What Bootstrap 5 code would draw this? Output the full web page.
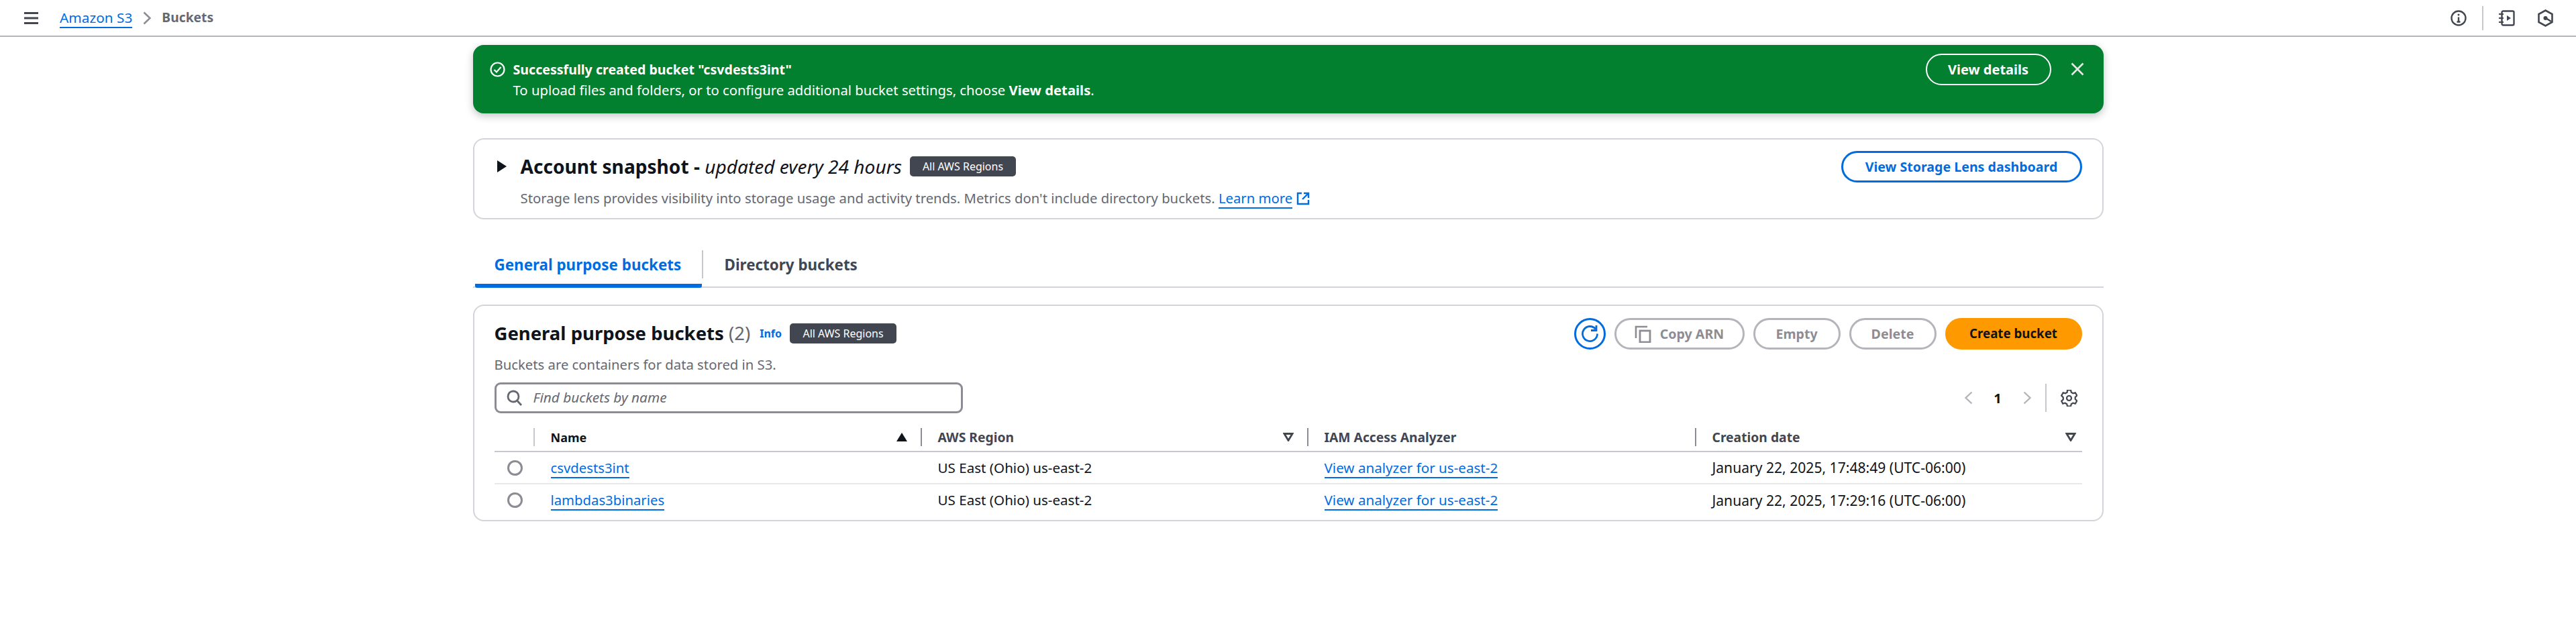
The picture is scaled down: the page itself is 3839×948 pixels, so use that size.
<!DOCTYPE html>
<html lang="en">
<head>
<meta charset="utf-8">
<title>Buckets | Amazon S3</title>
<link href="https://cdn.jsdelivr.net/npm/bootstrap@5.3.0/dist/css/bootstrap.min.css" rel="stylesheet">
<style>
:root{--ink:#0f141a;--ink2:#424650;--mut:#656871;--line:#c6c6cd;--blue:#006ce0;--off:#8c8c94;}
body{font-family:"Noto Sans","Open Sans",sans-serif;font-size:20.3px;color:var(--ink);background:#fff;min-height:948px;}
a.lk{color:var(--blue);text-decoration:none;border-bottom:2px solid var(--blue);padding-bottom:0;}
.topbar{height:55px;border-bottom:2px solid #b4b4bb;padding:0 34px 0 36px;}
.crumb-cur{color:var(--mut);font-weight:700;font-size:19.3px;}
.crumb a.lk{font-size:20.8px;line-height:28px;}
.tb-sep{width:2px;height:36px;background:#c6c6cd;margin:0 23px;}
.shell{width:2430px;margin:0 auto;padding-top:12px;}
.flash{height:102px;background:#037f30;border:0;border-radius:16px;color:#fff;padding:13px 29px 0 25px;margin:0 0 37px;box-shadow:0 4px 12px rgba(15,20,26,.25);}
.flash .ln{line-height:30px;}
.flash .ln.fw-bold{font-size:19.6px;}
.flash .txt{padding-top:9px;}
.flash svg.ok{margin:12px 12px 0 0;flex:none;}
.flash svg.xx{margin:13px 0 0 29px;}
.pill{height:47px;border-radius:24px;font-size:19.6px;font-weight:700;padding:0 30px;display:inline-flex;align-items:center;justify-content:center;border-width:2px;--bs-btn-line-height:1;}
.pill-w{width:187px;border-color:#fff;color:#fff;padding:0;font-size:20px;}
.pill-b{width:359px;border:3px solid var(--blue);color:var(--blue);padding:0;}
.pill-off,.pill-off:disabled{border:3px solid #b4b4bb;color:var(--off);padding:0;background:#fff;opacity:1;}
.pill-o{width:204px;background:#f90;border-color:#f90;color:var(--ink);padding:0;font-size:18.7px;}
.box{border:2px solid #d4d4da;border-radius:16px;background:#fff;}
.snap{height:121px;padding:17px 30px 0 34px;}
.snap h2{font-size:28.1px;font-weight:700;margin:0;line-height:46px;}
.snap h2 i{font-weight:400;}
.tagk{background:var(--ink2);color:#fff;border-radius:5px;font-size:16px;font-weight:400;height:30px;line-height:30px;padding:0;text-align:center;display:inline-block;}
.tag-a{width:158px;margin-left:12px;}
.tag-b{width:159px;margin-left:12px;}
.desc{color:var(--mut);line-height:30px;}
.snap .desc{margin:9px 0 0 35px;}
.bkt .desc{margin:8px 0 0;}
.ext{vertical-align:-3px;margin-left:6px;}
.tabsx{margin-top:44px;border-bottom:2px solid #d4d4da;height:58px;}
.tabsx .nav-link{border:0;border-radius:0;font-weight:700;font-size:22.4px;color:var(--ink2);padding:0 0 8px;height:56px;display:flex;align-items:center;margin:0;background:none;}
.tabsx .on{color:var(--blue);width:338px;border-bottom:6px solid var(--blue);border-radius:0 0 3px 3px;padding:0 0 4px 29px;margin:0 0 -2px 3px;height:58px;}
.tabsx .tb2{padding-left:32px;}
.tab-sep{width:2px;height:42px;background:#c6c6cd;margin-top:2px;}
.bkt{margin-top:25px;height:323px;padding:18px 30px 0 30px;}
.bkt h2{font-size:27.5px;font-weight:700;line-height:46px;margin:0;}
.bkt h2 span{font-weight:400;color:var(--mut);}
.info{color:var(--blue);font-size:16px;font-weight:700;text-decoration:none;margin-left:14px;}
.rf{width:47px;height:47px;border:3px solid var(--blue);border-radius:50%;background:#fff;padding:0;display:flex;align-items:center;justify-content:center;}
.srch{width:698px;height:46px;border:3px solid var(--off);border-radius:9px;padding:0 15px;}
.srch input{border:0;outline:0;font-style:italic;font-size:20.8px;padding:0;margin-left:16px;flex:1;color:var(--ink);}
.srch input::placeholder{color:var(--mut);opacity:1;}
.pg-sep{width:2px;height:42px;background:#c6c6cd;margin:0 21px 0 21px;}
.tbl{table-layout:fixed;width:2366px;margin:17px 0 0 0;--bs-table-bg:transparent;}
.tbl th,.tbl td{padding:0 0 0 26px;vertical-align:middle;box-shadow:none;}
.tbl thead th{height:40px;border-bottom:2px solid #c6c6cd;font-weight:700;font-size:19.3px;color:var(--ink2);position:relative;}
.tbl thead th.act{color:var(--ink);font-size:18px;}
.tbl thead th:not(:first-child)::before{content:"";position:absolute;left:0;top:5px;height:27px;width:2px;background:#8c8c94;}
.tbl thead th.nm::before{background:#c6c6cd;}
.tbl tbody td{height:48px;border-bottom:2px solid #e8e8ec;color:var(--ink);font-size:20.6px;}
.tbl tbody td.nmv{font-size:20.3px;}
.tbl tbody td.dt{font-size:21.1px;}
.tbl tbody tr:last-child td{border-bottom:0;}
.tbl td.rd{padding-left:19px;}
.rdo{display:block;width:23px;height:23px;border:3px solid #8c8c94;border-radius:50%;}
.sorter{position:absolute;right:20px;top:12px;line-height:0;}
.sorter.r0{right:9px;}
</style>
</head>
<body>
<header class="topbar d-flex align-items-center">
  <svg width="21" height="18" viewBox="0 0 21 18" class="me-4 flex-none" aria-hidden="true"><path d="M0 1.5h21M0 9h21M0 16.5h21" stroke="#424650" stroke-width="3"/></svg>
  <nav class="crumb d-flex align-items-center ms-2">
    <a class="lk" href="#">Amazon S3</a>
    <svg width="12" height="20" viewBox="0 0 12 20" class="mx-3" aria-hidden="true"><path d="M1.5 1.5 10.5 10l-9 8.5" fill="none" stroke="#8c8c94" stroke-width="2.6"/></svg>
    <span class="crumb-cur">Buckets</span>
  </nav>
  <div class="ms-auto d-flex align-items-center">
    <svg width="24" height="24" viewBox="0 0 24 24" aria-hidden="true"><circle cx="12" cy="12" r="10.5" fill="none" stroke="#424650" stroke-width="2.4"/><path d="M12 10.5V18M9.5 17.5h5" stroke="#424650" stroke-width="2.4" fill="none"/><circle cx="12" cy="7" r="1.5" fill="#424650"/></svg>
    <span class="tb-sep"></span>
    <svg width="24" height="24" viewBox="0 0 24 24" aria-hidden="true"><rect x="4.5" y="1.5" width="18" height="21" rx="2" fill="none" stroke="#424650" stroke-width="2.4"/><path d="M0 6h7M0 12h7M0 18h7" stroke="#424650" stroke-width="2.2"/><path d="M12 8v8l6-4z" fill="#424650"/></svg>
    <svg width="23" height="26" viewBox="0 0 23 26" aria-hidden="true" style="margin-left:34px"><path d="M11.5 1.5 21.5 7v12l-10 5.5-10-5.5V7z" fill="none" stroke="#424650" stroke-width="2.6"/><circle cx="11.5" cy="13" r="3" fill="#424650"/><path d="M12 13l8 5" stroke="#424650" stroke-width="2.6"/></svg>
  </div>
</header>
<main class="shell">
  <div class="alert flash d-flex" role="alert">
    <svg class="ok" width="23" height="23" viewBox="0 0 23 23" aria-hidden="true"><circle cx="11.5" cy="11.5" r="10" fill="none" stroke="#fff" stroke-width="2.2"/><path d="M6.5 12l3.500 3.500 6.500-7.500" fill="none" stroke="#fff" stroke-width="2.2"/></svg>
    <div class="flex-grow-1 txt">
      <div class="ln fw-bold">Successfully created bucket "csvdests3int"</div>
      <div class="ln">To upload files and folders, or to configure additional bucket settings, choose <b>View details</b>.</div>
    </div>
    <button class="btn pill pill-w">View details</button>
    <svg class="xx" width="20" height="20" viewBox="0 0 20 20" aria-hidden="true"><path d="M1.5 1.5l17 17M18.5 1.5l-17 17" stroke="#e6e6e6" stroke-width="2.6"/></svg>
  </div>

  <section class="box snap d-flex justify-content-between">
    <div>
      <div class="d-flex align-items-center">
        <svg width="14" height="18" viewBox="0 0 14 18" style="margin-right:21px" aria-hidden="true"><path d="M0 0l14 9-14 9z" fill="#0f141a"/></svg>
        <h2>Account snapshot - <i>updated every 24 hours</i></h2>
        <span class="tagk tag-a">All AWS Regions</span>
      </div>
      <p class="desc mb-0">Storage lens provides visibility into storage usage and activity trends. Metrics don't include directory buckets. <a class="lk" href="#">Learn more</a><svg class="ext" width="20" height="20" viewBox="0 0 20 20" aria-hidden="true"><path d="M8 2H2v16h16v-6M11 2h7v7M18 2 9 11" fill="none" stroke="#006ce0" stroke-width="2.4"/></svg></p>
    </div>
    <button class="btn pill pill-b">View Storage Lens dashboard</button>
  </section>

  <nav class="nav tabsx">
    <a class="nav-link on" href="#">General purpose buckets</a>
    <span class="tab-sep"></span>
    <a class="nav-link tb2" href="#">Directory buckets</a>
  </nav>

  <section class="box bkt">
    <div class="d-flex justify-content-between">
      <div>
        <div class="d-flex align-items-center">
          <h2>General purpose buckets <span>(2)</span></h2>
          <a class="info" href="#">Info</a>
          <span class="tagk tag-b">All AWS Regions</span>
        </div>
        <p class="desc mb-0">Buckets are containers for data stored in S3.</p>
      </div>
      <div class="d-flex" style="gap:13px">
        <button class="rf" aria-label="Refresh"><svg width="27" height="27" viewBox="0 0 27 27" aria-hidden="true"><path d="M22 6.5A11 11 0 1 0 24.5 13.5" fill="none" stroke="#006ce0" stroke-width="2.8"/><path d="M15 8.5h8V1" fill="none" stroke="#006ce0" stroke-width="2.8"/></svg></button>
        <button class="btn pill pill-off" style="width:194px" disabled><svg width="25" height="26" viewBox="0 0 25 26" style="margin-right:13px" aria-hidden="true"><path d="M2 19V2h17" fill="none" stroke="#8c8c94" stroke-width="2.6"/><rect x="8" y="8" width="15" height="17" fill="none" stroke="#8c8c94" stroke-width="2.8"/></svg>Copy ARN</button>
        <button class="btn pill pill-off" style="width:130px" disabled>Empty</button>
        <button class="btn pill pill-off" style="width:130px" disabled>Delete</button>
        <button class="btn pill pill-o">Create bucket</button>
      </div>
    </div>
    <div class="d-flex justify-content-between align-items-center" style="margin-top:12px">
      <label class="srch d-flex align-items-center">
        <svg width="24" height="25" viewBox="0 0 24 25" aria-hidden="true"><circle cx="10" cy="10" r="8" fill="none" stroke="#656871" stroke-width="2.8"/><path d="M15.5 16 22 23" stroke="#656871" stroke-width="2.8"/></svg>
        <input type="text" placeholder="Find buckets by name" aria-label="Find buckets by name">
      </label>
      <div class="d-flex align-items-center">
        <svg width="12" height="20" viewBox="0 0 12 20" aria-hidden="true"><path d="M10.5 1.5 1.5 10l9 8.5" fill="none" stroke="#b4b4bb" stroke-width="2.4"/></svg>
        <span class="fw-bold text-center" style="width:75px">1</span>
        <svg width="12" height="20" viewBox="0 0 12 20" aria-hidden="true"><path d="M1.5 1.5 10.5 10l-9 8.5" fill="none" stroke="#b4b4bb" stroke-width="2.4"/></svg>
        <span class="pg-sep"></span>
        <svg width="25" height="25" viewBox="0 0 25 25" style="margin-right:7px" aria-hidden="true"><path d="M10 1.5h5l.8 3.5 2.600 1.500 3.400-1 2.500 4.300-2.600 2.400v3l2.600 2.400-2.500 4.300-3.400-1-2.600 1.500-.8 3.500h-5l-.8-3.500-2.600-1.500-3.400 1L1.200 18l2.600-2.400v-3L1.200 9.800l2.500-4.300 3.400 1 2.600-1.500z" transform="translate(0 -1.2)" fill="none" stroke="#424650" stroke-width="2.2"/><circle cx="12.5" cy="12.5" r="3.5" fill="none" stroke="#424650" stroke-width="2.2"/></svg>
      </div>
    </div>
    <table class="table tbl mb-0">
      <colgroup><col style="width:58px"><col style="width:577px"><col style="width:576px"><col style="width:578px"><col></colgroup>
      <thead>
        <tr>
          <th scope="col"></th>
          <th scope="col" class="nm act">Name<span class="sorter"><svg width="16" height="13" viewBox="0 0 16 13" aria-hidden="true"><path d="M8 0l8 13H0z" fill="#0f141a"/></svg></span></th>
          <th scope="col">AWS Region<span class="sorter"><svg width="16" height="13" viewBox="0 0 16 13" aria-hidden="true"><path d="M2 1.5h12L8 11.5z" fill="none" stroke="#424650" stroke-width="2.8"/></svg></span></th>
          <th scope="col">IAM Access Analyzer</th>
          <th scope="col">Creation date<span class="sorter r0"><svg width="16" height="13" viewBox="0 0 16 13" aria-hidden="true"><path d="M2 1.5h12L8 11.5z" fill="none" stroke="#424650" stroke-width="2.8"/></svg></span></th>
        </tr>
      </thead>
      <tbody>
        <tr>
          <td class="rd"><span class="rdo"></span></td>
          <td class="nmv"><a class="lk" href="#">csvdests3int</a></td>
          <td>US East (Ohio) us-east-2</td>
          <td><a class="lk" href="#">View analyzer for us-east-2</a></td>
          <td class="dt">January 22, 2025, 17:48:49 (UTC-06:00)</td>
        </tr>
        <tr>
          <td class="rd"><span class="rdo"></span></td>
          <td class="nmv"><a class="lk" href="#">lambdas3binaries</a></td>
          <td>US East (Ohio) us-east-2</td>
          <td><a class="lk" href="#">View analyzer for us-east-2</a></td>
          <td class="dt">January 22, 2025, 17:29:16 (UTC-06:00)</td>
        </tr>
      </tbody>
    </table>
  </section>
</main>
</body>
</html>
